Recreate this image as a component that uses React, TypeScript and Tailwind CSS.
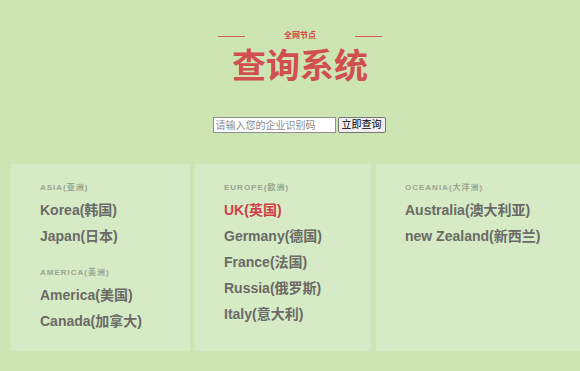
const font = { fontFamily: '"Liberation Sans", "Noto Sans CJK SC", Arial, sans-serif' };

interface Region {
  label: string;
  countries: { name: string; active?: boolean }[];
}

const columns: { width: string; regions: Region[] }[] = [
  {
    width: 'w-[179px]',
    regions: [
      { label: 'ASIA(亚洲)', countries: [{ name: 'Korea(韩国)' }, { name: 'Japan(日本)' }] },
      { label: 'AMERICA(美洲)', countries: [{ name: 'America(美国)' }, { name: 'Canada(加拿大)' }] },
    ],
  },
  {
    width: 'w-[176px]',
    regions: [
      {
        label: 'EUROPE(欧洲)',
        countries: [
          { name: 'UK(英国)', active: true },
          { name: 'Germany(德国)' },
          { name: 'France(法国)' },
          { name: 'Russia(俄罗斯)' },
          { name: 'Italy(意大利)' },
        ],
      },
    ],
  },
  {
    width: 'w-[220px]',
    regions: [
      { label: 'OCEANIA(大洋洲)', countries: [{ name: 'Australia(澳大利亚)' }, { name: 'new Zealand(新西兰)' }] },
    ],
  },
];

export default function App() {
  return (
    <div className="h-[371px] w-[580px] overflow-hidden bg-[#cde5b3]" style={font}>
      {/* the page is centred on a 600px-wide layout */}
      <header className="flex flex-col items-center pl-[20px] pt-[31px]">
        <div className="flex items-center">
          <span className="h-px w-[27px] bg-[#d25a5a]" />
          <span className="mx-[39px] text-[8px] font-bold leading-[10px] text-[#d04848]">全网节点</span>
          <span className="h-px w-[27px] bg-[#d25a5a]" />
        </div>
        <h1 className="mt-[6px] text-[34px] font-bold leading-[38px] text-[#d14f4f]">查询系统</h1>
      </header>

      <div className="mt-[32px] flex items-center justify-center gap-[2px] pl-[18px]">
        <input
          placeholder="请输入您的企业识别码"
          className="h-[16px] w-[123px] border border-[#8f8f8f] bg-white px-[2px] text-[10px] text-[#333] placeholder:text-[#8a8a8a]"
        />
        <button className="h-[16px] w-[48px] rounded-[2px] border border-[#767676] bg-[#efefef] text-[10px] leading-[14px] text-black">
          立即查询
        </button>
      </div>

      <div className="mt-[31px] flex gap-[5px] pl-[11px]">
        {columns.map((col, i) => (
          <section key={i} className={`${col.width} h-[187px] shrink-0 bg-[#d6eac5] pl-[29px] pt-[19px]`}>
            {col.regions.map((region) => (
              <div key={region.label} className="mb-[19px]">
                <p className="text-[8px] font-bold leading-[10px] tracking-[1px] text-[#9aa58f]">{region.label}</p>
                <ul className="mt-[4px]">
                  {region.countries.map((c) => (
                    <li
                      key={c.name}
                      className={`whitespace-nowrap text-[14px] font-bold leading-[26px] ${c.active ? 'text-[#d03e48]' : 'text-[#6a6a66]'}`}
                    >
                      {c.name}
                    </li>
                  ))}
                </ul>
              </div>
            ))}
          </section>
        ))}
      </div>
    </div>
  );
}
